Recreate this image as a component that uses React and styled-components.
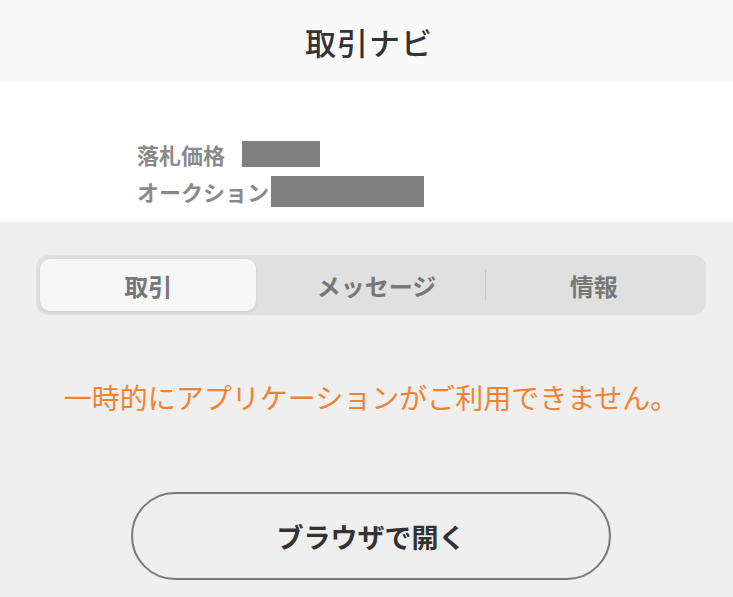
import styled, { createGlobalStyle } from "styled-components";

const GlobalStyle = createGlobalStyle`
  html, body {
    margin: 0;
    padding: 0;
    background: #efefef;
    font-family: "Noto Sans CJK JP", "Noto Sans", sans-serif;
  }
`;

const Page = styled.div`
  width: 733px;
  min-height: 597px;
  background: #efefef;
`;

const Header = styled.header`
  height: 82px;
  background: #f9f9f9;
  display: flex;
  align-items: center;
  justify-content: center;
`;

const Title = styled.h1`
  margin: 0 0 0 5px;
  font-size: 31px;
  font-weight: 500;
  color: #333;
  letter-spacing: 1px;
`;

const Summary = styled.section`
  height: 140px;
  background: #fff;
  box-sizing: border-box;
  padding: 58px 0 0 137px;
  display: flex;
  flex-direction: column;
  gap: 9px;
`;

const Row = styled.div`
  display: flex;
  align-items: center;
  font-size: 22px;
  font-weight: 700;
  color: #8a8a8a;
  height: 28px;
`;

const Mask = styled.span`
  display: inline-block;
  background: #808080;
  width: ${(p) => p.w}px;
  height: ${(p) => p.h}px;
  margin-left: ${(p) => p.gap}px;
`;

const Body = styled.main`
  padding: 33px 27px 0 36px;
  display: flex;
  flex-direction: column;
  align-items: center;
`;

const Tabs = styled.div`
  width: 670px;
  height: 60px;
  box-sizing: border-box;
  padding: 4px;
  background: #e0e0e0;
  border-radius: 13px;
  display: flex;
  align-items: center;
`;

const Tab = styled.div`
  flex: 1;
  height: 52px;
  display: flex;
  align-items: center;
  justify-content: center;
  font-size: 24px;
  font-weight: 700;
  color: #777;
  border-radius: 10px;
  margin-right: ${(p) => (p.active ? "12px" : "0")};
  background: ${(p) => (p.active ? "#f6f6f6" : "transparent")};
  box-shadow: ${(p) => (p.active ? "0 1px 3px rgba(0,0,0,0.12)" : "none")};
`;

const Divider = styled.span`
  width: 1px;
  height: 30px;
  background: #c8c8c8;
`;

const Notice = styled.p`
  margin: 62px 0 0;
  font-size: 28px;
  color: #f08332;
  text-align: center;
  white-space: nowrap;
  width: 100%;
`;

const OpenButton = styled.button`
  margin-top: 75px;
  width: 480px;
  height: 88px;
  box-sizing: border-box;
  border: 2px solid #7a7a7a;
  border-radius: 44px;
  background: transparent;
  font-family: inherit;
  font-size: 27px;
  font-weight: 700;
  color: #333;
`;

export default function App() {
  return (
    <Page>
      <GlobalStyle />
      <Header>
        <Title>取引ナビ</Title>
      </Header>
      <Summary>
        <Row>
          落札価格
          <Mask w={78} h={26} gap={17} />
        </Row>
        <Row>
          オークション
          <Mask w={153} h={31} gap={2} />
        </Row>
      </Summary>
      <Body>
        <Tabs>
          <Tab active>取引</Tab>
          <Tab>メッセージ</Tab>
          <Divider />
          <Tab>情報</Tab>
        </Tabs>
        <Notice>一時的にアプリケーションがご利用できません。</Notice>
        <OpenButton>ブラウザで開く</OpenButton>
      </Body>
    </Page>
  );
}
